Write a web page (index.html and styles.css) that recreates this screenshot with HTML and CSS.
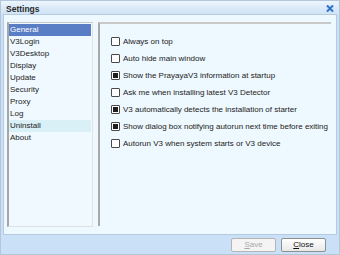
FILE: index.html
```html
<!DOCTYPE html>
<html lang="en">
<head>
    <meta charset="UTF-8" />
    <meta name="viewport" content="width=device-width, initial-scale=1.0" />
    <title>Settings</title>
    <link rel="stylesheet" href="styles.css">
</head>
<body>
    <div class="window">
        <!-- Title bar -->
        <div class="titlebar">
            <span class="title">Settings</span>
            <button class="close-x" title="Close">
                <svg width="8" height="7" viewBox="0 0 8 7">
                    <path d="M1 0.5 L7 6.5 M7 0.5 L1 6.5" stroke="#9cc3ec" stroke-width="3" />
                    <path d="M1 0.5 L7 6.5 M7 0.5 L1 6.5" stroke="#2b6cc4" stroke-width="1.6" />
                </svg>
            </button>
        </div>

        <!-- Main area -->
        <div class="content">
            <ul class="menu">
                <li class="selected">General</li>
                <li>V3Login</li>
                <li>V3Desktop</li>
                <li>Display</li>
                <li>Update</li>
                <li>Security</li>
                <li>Proxy</li>
                <li>Log</li>
                <li class="hover">Uninstall</li>
                <li>About</li>
            </ul>
            <div class="panel">
                <label class="opt"><span class="box"></span>Always on top</label>
                <label class="opt"><span class="box"></span>Auto hide main window</label>
                <label class="opt"><span class="box checked"></span>Show the PrayayaV3 information at startup</label>
                <label class="opt"><span class="box"></span>Ask me when installing latest V3 Detector</label>
                <label class="opt"><span class="box checked"></span>V3 automatically detects the installation of starter</label>
                <label class="opt"><span class="box checked"></span>Show dialog box notifying autorun next time before exiting</label>
                <label class="opt"><span class="box"></span>Autorun V3 when system starts or V3 device</label>
            </div>
        </div>

        <!-- Buttons -->
        <div class="footer">
            <button class="btn" disabled><u>S</u>ave</button>
            <button class="btn"><u>C</u>lose</button>
        </div>
    </div>
</body>
</html>
```

FILE: styles.css
```css
/* 기본 */
html, body {
    margin: 0;
    padding: 0;
    width: 340px;
    height: 255px;
    overflow: hidden;
    font-family: "Liberation Sans", Arial, sans-serif;
    font-size: 8px;
    color: #222;
}
.window {
    box-sizing: border-box;
    width: 340px;
    height: 255px;
    border: 1px solid #b3c6da;
    background: #c9e0f6;
    display: flex;
    flex-direction: column;
}

/* 타이틀 */
.titlebar {
    height: 11px;
    display: flex;
    align-items: center;
    justify-content: space-between;
    padding: 2px 5px 0 5px;
    background: linear-gradient(180deg, #edf5fc 0%, #dceaf8 50%, #d0e4f7 100%);
}
.title {
    font-weight: bold;
    font-size: 8.5px;
    color: #2a2a2a;
}
.close-x {
    border: none;
    background: none;
    padding: 0;
    width: 8px;
    height: 7px;
    display: flex;
}

/* 본문 */
.content {
    flex: 1;
    margin: 0 2px;
    border: 1px solid #b6cbe0;
    background: #eef8ff;
    display: flex;
    gap: 5px;
    padding: 7px 5px 7px 3px;
}
.menu {
    list-style: none;
    margin: 0;
    padding: 1px 1px 0 0;
    width: 82px;
    border-left: 2px solid #a6a6a6;
    border-top: 1px solid #c8c8c8;
    border-right: 1px solid #e2e2e2;
    border-bottom: 1px solid #e2e2e2;
    background: #f0f9ff;
}
.menu li {
    height: 12px;
    line-height: 12px;
    padding-left: 1px;
    white-space: nowrap;
}
.menu li.selected {
    background: #5a7ec5;
    color: #fff;
}
.menu li.hover {
    background: #d8f0f6;
}

.panel {
    flex: 1;
    margin-bottom: 1px;
    border-left: 2px solid #a8a8a8;
    border-top: 2px solid #c9c9c9;
    overflow: hidden;
    padding: 13px 0 0 11px;
    display: flex;
    flex-direction: column;
    gap: 8px;
}
.opt {
    display: flex;
    align-items: center;
    gap: 3px;
    height: 9px;
    white-space: nowrap;
}
.box {
    flex: none;
    box-sizing: border-box;
    width: 9px;
    height: 9px;
    border: 1px solid #4a4a4a;
    border-radius: 1px;
    background: #fff;
    position: relative;
}
.box.checked::after {
    content: "";
    position: absolute;
    left: 1px; top: 1px;
    width: 5px; height: 5px;
    background: #1e1e1e;
}

/* 하단 버튼 */
.footer {
    height: 19px;
    display: flex;
    justify-content: flex-end;
    align-items: center;
    gap: 5px;
    padding-right: 13px;
}
.btn {
    width: 45px;
    height: 14px;
    padding: 0;
    font-family: "Liberation Sans", Arial, sans-serif;
    font-size: 8px;
    color: #111;
    border: 1px solid #8e8f8f;
    border-radius: 2px;
    background: linear-gradient(180deg, #ffffff 0%, #f4f4f4 50%, #e8e8e8 100%);
}
.btn u { text-decoration: underline; }
.btn:disabled {
    color: #a8a8a8;
    border-color: #b5b5b5;
    background: #f4f4f4;
}
```
